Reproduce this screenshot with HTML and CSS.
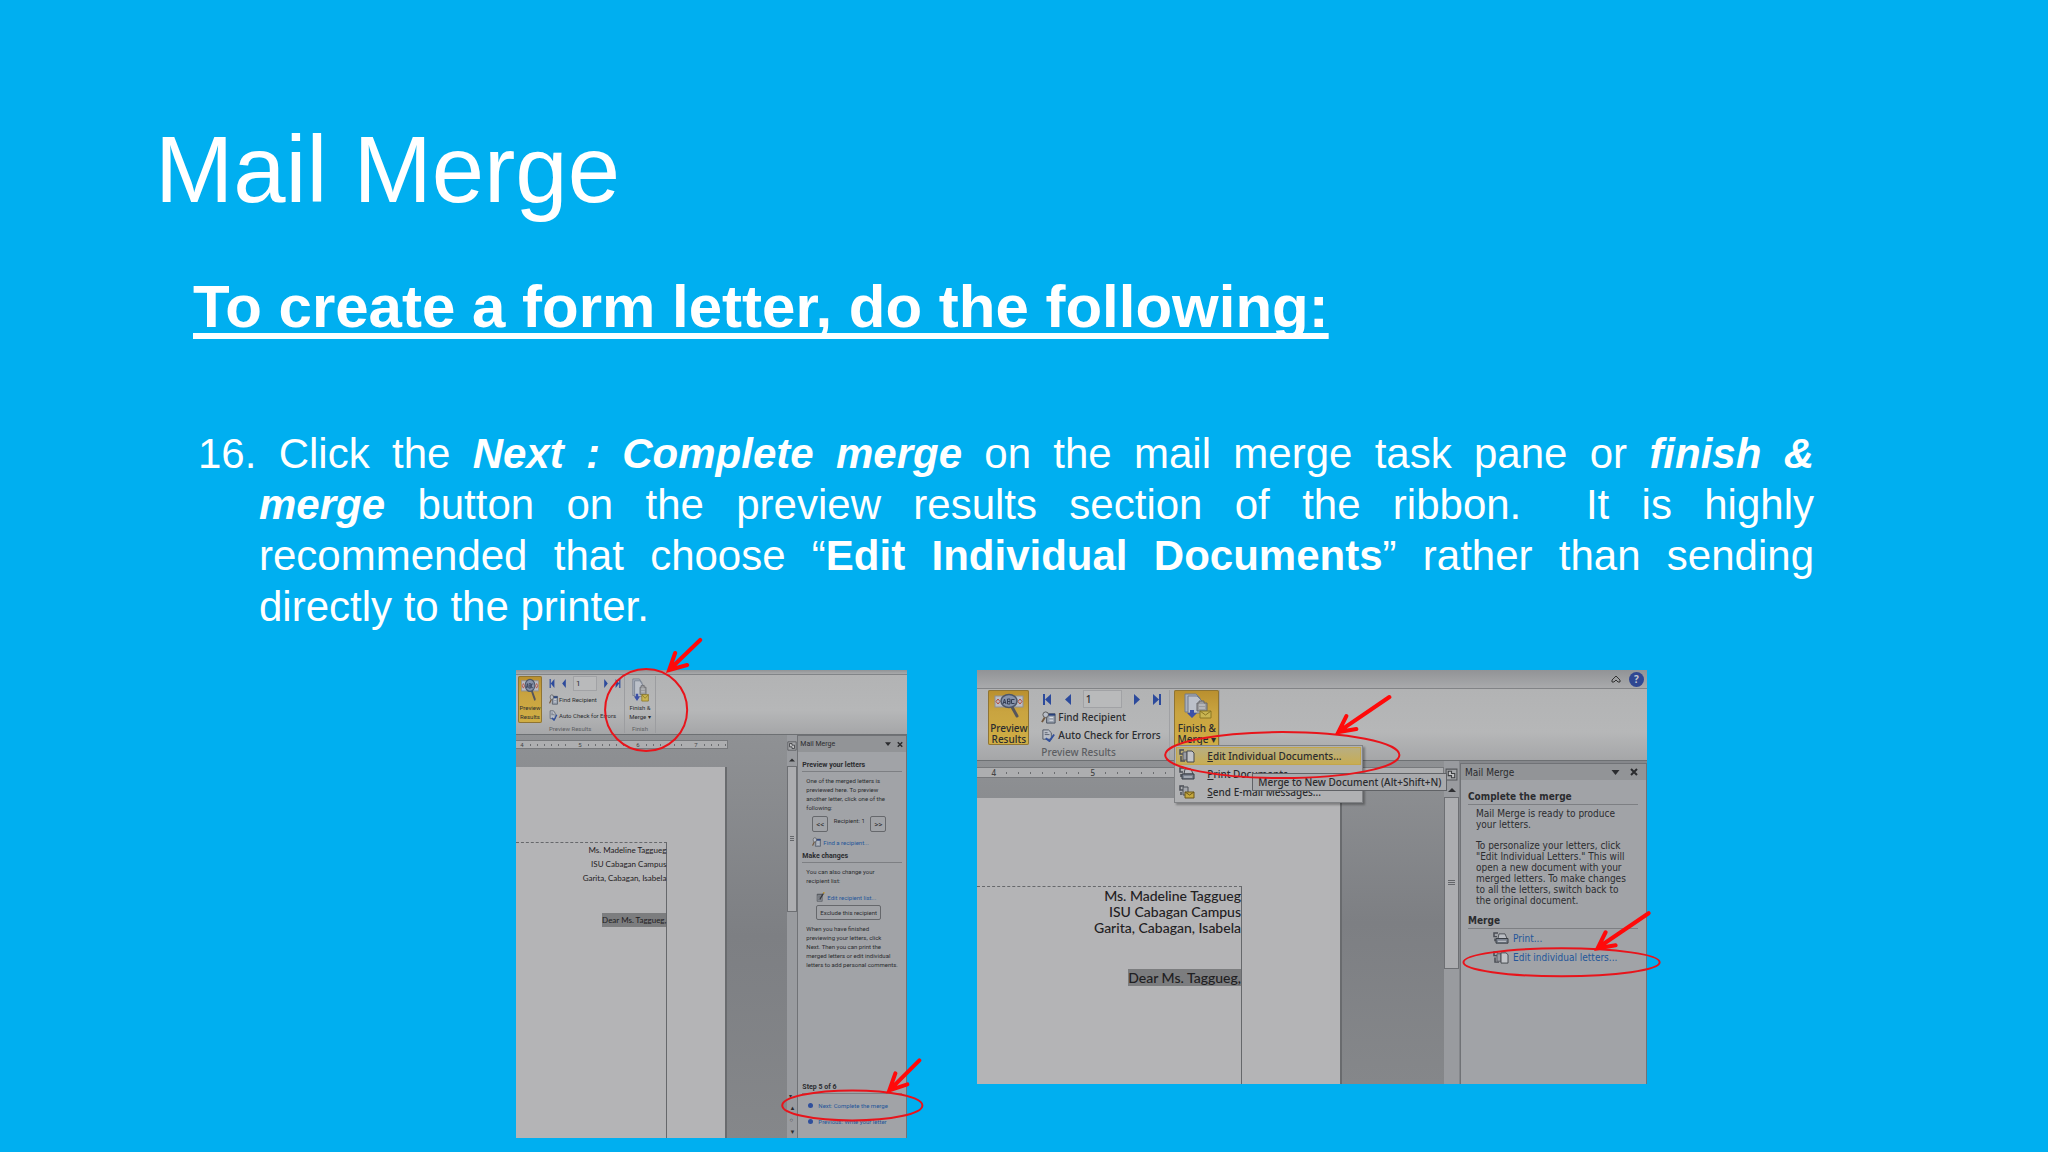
FILE: index.html
```html
<!DOCTYPE html>
<html lang="en">
<head>
    <meta charset="UTF-8">
    <meta name="viewport" content="width=device-width, initial-scale=1.0">
    <title>Mail Merge</title>
    <link rel="stylesheet" href="styles.css">
</head>
<body>
    <!-- Shared icons -->
    <svg class="sprite" aria-hidden="true">
        <symbol id="i-preview" viewBox="0 0 30 26" preserveAspectRatio="none">
            <rect x="1" y="3" width="28" height="11" fill="#b9bcc4" stroke="#8d8f96"/>
            <path d="M4 6l2 2.500-2 2.500-2-2.500zM26 6l2 2.500-2 2.500-2-2.500z" fill="none" stroke="#b5493c"/>
            <path d="M18 14l5 9" stroke="#55555c" stroke-width="3" stroke-linecap="round"/>
            <ellipse cx="15" cy="8" rx="8" ry="6.500" fill="#8793ab" stroke="#4c5669" stroke-width="1.500"/>
            <path d="M9 11l1.500-5 1.500 5M9.500 9.500h2M13.500 6v5h2.500V6zM13.500 8.500h2.500M20.500 6.500h-3v4h3" fill="none" stroke="#343e55"/>
        </symbol>
        <symbol id="i-finish" viewBox="0 0 30 26" preserveAspectRatio="none">
            <path d="M3 1h11l4 4v14H3z" fill="#a9b0bd" stroke="#737b8a"/>
            <path d="M6 3h9l5 5v12H6z" fill="#bcc1ca" stroke="#737b8a"/>
            <path d="M15 10h2V8h5v2h3v8H15z" fill="#9a9b9e" stroke="#66676b"/>
            <path d="M17 12h6M17 15h6" stroke="#d0d1d3"/>
            <path d="M8 17h4v3h3l-5 5-5-5h3z" fill="#3c51a8"/>
            <path d="M18 18h11v7H18z" fill="#c9b552" stroke="#8a7624"/>
            <path d="M18 18l5.500 4 5.500-4" fill="none" stroke="#8a7624"/>
        </symbol>
        <symbol id="i-find" viewBox="0 0 16 14" preserveAspectRatio="none">
            <path d="M6 3h9v10H6z" fill="#9ba3b0" stroke="#444c5b"/>
            <path d="M6 4h9" stroke="#27407c" stroke-width="2"/>
            <circle cx="5" cy="4" r="3" fill="#b9bec8" stroke="#555"/>
            <path d="M4 7l-3 5" stroke="#70573f" stroke-width="2"/>
            <path d="M9 7h4M9 10h4" stroke="#dcdfe4"/>
        </symbol>
        <symbol id="i-check" viewBox="0 0 16 14" preserveAspectRatio="none">
            <path d="M2 1h6l3 3v7H2z" fill="#b8bdc6" stroke="#505765"/>
            <path d="M4 4h3M4 6h5" stroke="#5a6170"/>
            <path d="M5 10l4 3 5-7" fill="none" stroke="#31509c" stroke-width="2"/>
        </symbol>
        <symbol id="i-letters" viewBox="0 0 16 14" preserveAspectRatio="none">
            <path d="M5 1H1v4h3M2 7v5h4" fill="none" stroke="#4a4d55" stroke-width="1.500"/>
            <path d="M4 3h4v8H4z" fill="#9a9da4" stroke="#5a5d64"/>
            <path d="M8 2h5l2 2v9H8z" fill="#c2c4c8" stroke="#45484e"/>
        </symbol>
        <symbol id="i-print" viewBox="0 0 16 14" preserveAspectRatio="none">
            <path d="M5 1H1v4h3M2 7v3" fill="none" stroke="#4a4d55" stroke-width="1.500"/>
            <path d="M6 2h6l2 5H5z" fill="#b9bcc2" stroke="#4d5056"/>
            <path d="M3 7h12v5H3z" fill="#7b828f" stroke="#363a42"/>
            <path d="M5 10h8" stroke="#c8cbd0"/>
        </symbol>
        <symbol id="i-mail" viewBox="0 0 16 14" preserveAspectRatio="none">
            <path d="M5 1H1v4h3M2 7v3" fill="none" stroke="#4a4d55" stroke-width="1.500"/>
            <path d="M4 2h5v8H4z" fill="#a5a8ae" stroke="#4d5056"/>
            <path d="M6 7h9v6H6z" fill="#c5a83f" stroke="#6b571a"/>
            <path d="M6 7l4.500 3L15 7" fill="none" stroke="#6b571a"/>
        </symbol>
        <symbol id="i-edit" viewBox="0 0 16 14" preserveAspectRatio="none">
            <path d="M2 3h9v10H2z" fill="#8e9299" stroke="#4d5056"/>
            <path d="M2 4h9M4 7h5M4 10h5" stroke="#3d4046"/>
            <path d="M7 10l7-9" stroke="#35363a" stroke-width="2"/>
            <path d="M13 2l2-2" stroke="#c79b2e" stroke-width="2"/>
        </symbol>
        <symbol id="i-prev" viewBox="0 0 10 10" preserveAspectRatio="none">
            <path d="M8 0v10L2 5z" fill="#2c4a9c"/>
        </symbol>
        <symbol id="i-next" viewBox="0 0 10 10" preserveAspectRatio="none">
            <path d="M2 0v10l6-5z" fill="#2c4a9c"/>
        </symbol>
        <symbol id="i-first" viewBox="0 0 10 10" preserveAspectRatio="none">
            <path d="M1 0h2v10H1zM9 0v10L3 5z" fill="#2c4a9c"/>
        </symbol>
        <symbol id="i-last" viewBox="0 0 10 10" preserveAspectRatio="none">
            <path d="M7 0h2v10H7zM1 0v10l6-5z" fill="#2c4a9c"/>
        </symbol>
        <symbol id="i-browse" viewBox="0 0 12 12">
            <path d="M1 1h10v10H1z" fill="#a4a6a9" stroke="#55575a"/>
            <path d="M3 3h3v2h3v4H6V7H3z" fill="#c0c1c3" stroke="#3d3f42"/>
        </symbol>
        <symbol id="i-up" viewBox="0 0 8 5">
            <path d="M0 5l4-4 4 4z" fill="#2f3033"/>
        </symbol>
        <symbol id="i-down" viewBox="0 0 8 5">
            <path d="M0 0h8L4 5z" fill="#2b2c2f"/>
        </symbol>
        <symbol id="i-close" viewBox="0 0 8 8">
            <path d="M1 1l6 6M7 1L1 7" stroke="#2b2c2f" stroke-width="2"/>
        </symbol>
    </svg>

    <main class="slide">
        <h1>Mail Merge</h1>
        <h2>To create a form letter, do the following:</h2>
        <p class="step">
            <span class="line first">16. Click the <b><i>Next : Complete merge</i></b> on the mail merge task pane or <b><i>finish &amp;</i></b></span>
            <span class="line"><b><i>merge</i></b> button on the preview results section of the ribbon.&nbsp; It is highly</span>
            <span class="line">recommended that choose “<b>Edit Individual Documents</b>” rather than sending</span>
            <span class="line last">directly to the printer.</span>
        </p>

        <div class="figures">
            <!-- Step 5 of 6 -->
            <section class="shot shot-small">
                <div class="titlebar"></div>
                <div class="ribbon">
                    <button class="big-btn active"><svg><use href="#i-preview"/></svg>Preview<br>Results</button>
                    <div class="group">
                        <div class="nav">
                            <button aria-label="First"><svg><use href="#i-first"/></svg></button>
                            <button aria-label="Previous"><svg><use href="#i-prev"/></svg></button>
                            <input type="text" value="1" aria-label="Record">
                            <button aria-label="Next"><svg><use href="#i-next"/></svg></button>
                            <button aria-label="Last"><svg><use href="#i-last"/></svg></button>
                        </div>
                        <button class="row-btn"><svg><use href="#i-find"/></svg>Find Recipient</button>
                        <button class="row-btn"><svg><use href="#i-check"/></svg>Auto Check for Errors</button>
                        <span class="group-name">Preview Results</span>
                    </div>
                    <div class="group finish">
                        <button class="big-btn"><svg><use href="#i-finish"/></svg>Finish &amp;<br>Merge ▾</button>
                        <span class="group-name">Finish</span>
                    </div>
                </div>
                <div class="work">
                    <div class="doc">
                        <div class="ruler"><span>4</span><i></i><span>5</span><i></i><span>6</span><i></i><span>7</span><i class="tail"></i></div>
                        <div class="page">
                            <div class="letter">
                                <p>Ms. Madeline Taggueg<br>ISU Cabagan Campus<br>Garita, Cabagan, Isabela</p>
                                <p><mark>Dear Ms. Taggueg,</mark></p>
                            </div>
                        </div>
                    </div>
                    <div class="scroll">
                        <svg class="browse"><use href="#i-browse"/></svg>
                        <svg class="up"><use href="#i-up"/></svg>
                        <div class="thumb"></div>
                        <div class="scroll-end"><span>▾</span><span>▲</span><span>○</span><span>▼</span></div>
                    </div>
                    <aside class="pane">
                        <div class="pane-head"><span>Mail Merge</span><svg class="down"><use href="#i-down"/></svg><svg class="close"><use href="#i-close"/></svg></div>
                        <div class="pane-body">
                            <h3>Preview your letters</h3>
                            <p>One of the merged letters is<br>previewed here. To preview<br>another letter, click one of the<br>following:</p>
                            <div class="recipient"><button>&lt;&lt;</button><span>Recipient: 1</span><button>&gt;&gt;</button></div>
                            <a class="link" href="#"><svg><use href="#i-find"/></svg>Find a recipient...</a>
                            <h3>Make changes</h3>
                            <p>You can also change your<br>recipient list:</p>
                            <a class="link indent" href="#"><svg><use href="#i-edit"/></svg>Edit recipient list...</a>
                            <button class="exclude">Exclude this recipient</button>
                            <p>When you have finished<br>previewing your letters, click<br>Next. Then you can print the<br>merged letters or edit individual<br>letters to add personal comments.</p>
                            <div class="steps">
                                <h3>Step 5 of 6</h3>
                                <a class="step-link" href="#">Next: Complete the merge</a>
                                <a class="step-link" href="#">Previous: Write your letter</a>
                            </div>
                        </div>
                    </aside>
                </div>
                <svg class="marks" viewBox="0 0 391 468">
                    <circle cx="130" cy="40" r="41"/>
                    <ellipse cx="336" cy="435" rx="70" ry="15"/>
                    <path d="M184-30L154-1M159-17L153 0L171-5M403 390L374 419M379 403L373 420L391 414"/>
                </svg>
            </section>

            <!-- Step 6 of 6 -->
            <section class="shot shot-large">
                <div class="titlebar">
                    <svg class="collapse" viewBox="0 0 10 8"><path d="M1 5l4-4 4 4v2H7L5 5 3 7H1z" fill="none" stroke="#333"/></svg>
                    <button class="help" aria-label="Help">?</button>
                </div>
                <div class="ribbon">
                    <button class="big-btn active"><svg><use href="#i-preview"/></svg>Preview<br>Results</button>
                    <div class="group">
                        <div class="nav">
                            <button aria-label="First"><svg><use href="#i-first"/></svg></button>
                            <button aria-label="Previous"><svg><use href="#i-prev"/></svg></button>
                            <input type="text" value="1" aria-label="Record">
                            <button aria-label="Next"><svg><use href="#i-next"/></svg></button>
                            <button aria-label="Last"><svg><use href="#i-last"/></svg></button>
                        </div>
                        <button class="row-btn"><svg><use href="#i-find"/></svg>Find Recipient</button>
                        <button class="row-btn"><svg><use href="#i-check"/></svg>Auto Check for Errors</button>
                        <span class="group-name">Preview Results</span>
                    </div>
                    <div class="group finish">
                        <button class="big-btn active"><svg><use href="#i-finish"/></svg>Finish &amp;<br>Merge ▾</button>
                        <div class="menu">
                            <button class="hover"><svg><use href="#i-letters"/></svg><span><u>E</u>dit Individual Documents...</span></button>
                            <button><svg><use href="#i-print"/></svg><span><u>P</u>rint Documents...</span></button>
                            <button><svg><use href="#i-mail"/></svg><span><u>S</u>end E-mail Messages...</span></button>
                            <div class="tooltip">Merge to New Document (Alt+Shift+N)</div>
                        </div>
                    </div>
                </div>
                <div class="work">
                    <div class="doc">
                        <div class="ruler"><span>4</span><i></i><span>5</span><i></i><span>6</span><i></i><span>7</span></div>
                        <div class="page">
                            <div class="letter">
                                <p>Ms. Madeline Taggueg<br>ISU Cabagan Campus<br>Garita, Cabagan, Isabela</p>
                                <p><mark>Dear Ms. Taggueg,</mark></p>
                            </div>
                        </div>
                    </div>
                    <div class="scroll">
                        <svg class="browse"><use href="#i-browse"/></svg>
                        <svg class="up"><use href="#i-up"/></svg>
                        <div class="thumb"></div>
                    </div>
                    <aside class="pane">
                        <div class="pane-head"><span>Mail Merge</span><svg class="down"><use href="#i-down"/></svg><svg class="close"><use href="#i-close"/></svg></div>
                        <div class="pane-body">
                            <h3>Complete the merge</h3>
                            <p>Mail Merge is ready to produce<br>your letters.</p>
                            <p>To personalize your letters, click<br>"Edit Individual Letters." This will<br>open a new document with your<br>merged letters. To make changes<br>to all the letters, switch back to<br>the original document.</p>
                            <h3>Merge</h3>
                            <a class="link" href="#"><svg><use href="#i-print"/></svg>Print...</a>
                            <a class="link" href="#"><svg><use href="#i-letters"/></svg>Edit individual letters...</a>
                        </div>
                    </aside>
                </div>
                <svg class="marks" viewBox="0 0 669 414">
                    <ellipse cx="305" cy="85" rx="117" ry="23"/>
                    <ellipse cx="584" cy="292" rx="98" ry="14"/>
                    <path d="M412 27L362 61M369 46L361 62L379 59M671 243L621 277M628 262L620 278L638 275"/>
                </svg>
            </section>
        </div>
    </main>
</body>
</html>
```
FILE: styles.css
```css
* {
    box-sizing: border-box;
}
body {
    margin: 0;
    min-height: 100vh;
    background-color: #00aff0;
    color: white;
    font-family: "Liberation Sans", Arial, sans-serif;
}
h1, h2, h3, p {
    margin: 0;
}
button, input {
    font: inherit;
    color: inherit;
    margin: 0;
    padding: 0;
    border: none;
    background: none;
}
.sprite {
    display: none;
}
.slide {
    padding-top: 116px;
}
h1 {
    padding-left: 155px;
    font-size: 94px;
    font-weight: normal;
    line-height: 108px;
}
h2 {
    padding: 49px 0 0 193px;
    font-size: 60px;
    line-height: 68px;
    text-decoration: underline;
    text-decoration-thickness: 6px;
    text-underline-offset: 6px;
    text-decoration-skip-ink: none;
}
.step {
    padding: 87px 234px 0 259px;
    font-size: 42px;
    line-height: 51px;
}
.line {
    display: block;
    text-align: justify;
    text-align-last: justify;
}
.line.first {
    margin-left: -61px;
}
.line.last {
    text-align-last: left;
}
.figures {
    display: grid;
    grid-template-columns: 391fr 669fr;
    gap: 70px;
    align-items: start;
    padding: 38px 401px 13px 516px;
}

/* Word windows */
.shot {
    position: relative;
    display: flex;
    flex-direction: column;
    min-width: 0;
    background: #85878b;
    color: #2b2c2f;
    font-family: "Noto Sans", sans-serif;
    white-space: nowrap;
}
.shot-small {
    aspect-ratio: 391 / 468;
    font-family: Roboto, sans-serif;
    font-size: 6px;
    line-height: 9px;
}
.shot-large {
    aspect-ratio: 669 / 414;
    font-size: 10px;
    font-weight: 500;
    line-height: 11px;
}
.titlebar {
    display: flex;
    justify-content: flex-end;
    align-items: center;
    gap: 8px;
    height: 5px;
    padding-right: 3px;
    background: linear-gradient(#919396, #a9aaac);
    border-bottom: 1px solid #828487;
}
.collapse {
    width: 10px;
    height: 8px;
}
.help {
    width: 15px;
    height: 15px;
    border-radius: 50%;
    background: #2f4792;
    color: #c3c6d0;
    font-weight: bold;
}
.ribbon {
    display: flex;
    height: 60px;
    padding: 1px 2px;
    background: linear-gradient(#b2b3b4, #b6b7b8 60%, #a5a6a8);
    border-bottom: 1px solid #6d7073;
}
.big-btn {
    display: flex;
    flex-direction: column;
    align-items: center;
    border-radius: 2px;
}
.big-btn.active {
    background: linear-gradient(#b98f2e, #c9a440 40%, #d0ae45);
    box-shadow: inset 0 0 0 1px #8f7433;
}
.group {
    display: flex;
    flex-direction: column;
}
.nav {
    display: flex;
    align-items: center;
}
.nav button {
    display: flex;
}
.nav input {
    border: 1px solid #a1a2a5;
    background: #b9babb;
}
.row-btn {
    display: flex;
    align-items: center;
}
.group-name {
    color: #5c5e62;
}
.work {
    display: flex;
    flex: 1;
    min-height: 0;
}
.doc {
    display: flex;
    flex-direction: column;
    flex: 1;
    min-width: 0;
    background: linear-gradient(#8f9194, #7d7f83 50%, #85878a);
}
.ruler {
    display: flex;
    align-items: center;
    background: #adaeb0;
    border: 1px solid #77797c;
    border-left: none;
    color: #444;
    overflow: hidden;
}
.ruler span {
    flex: none;
    text-align: center;
}
.ruler i {
    flex: none;
    height: 2px;
}
.page {
    flex: 1;
    background: #b4b4b6;
    border-right: 2px solid #696b6e;
}
.letter {
    height: 100%;
    border-top: 1px dashed #66686b;
    border-right: 1px solid #66686b;
    font-family: Lato, sans-serif;
    text-align: right;
    color: #1f2022;
}
mark {
    background: #7c7d7f;
    color: inherit;
}
.scroll {
    display: flex;
    flex-direction: column;
    align-items: center;
    flex: none;
    background: #999b9f;
}
.thumb {
    display: flex;
    align-items: center;
    justify-content: center;
    width: 100%;
    border: 1px solid #6d6f73;
    background: #acadb0;
}
.thumb::after {
    content: "";
    width: 50%;
    height: 6px;
    background: repeating-linear-gradient(#64666a 0 1px, #acadb0 1px 2px);
}
.pane {
    flex: none;
    border: 1px solid #707276;
    border-bottom: none;
    background: #a1a3a7;
}
.pane-head {
    display: flex;
    align-items: center;
    background: #929497;
}
.pane-head span {
    flex: 1;
}
.pane h3 {
    font-size: inherit;
    font-weight: bold;
    border-bottom: 1px solid #7d7f83;
}
.link {
    display: flex;
    align-items: center;
    color: #24569a;
    text-decoration: none;
}
.marks {
    position: absolute;
    inset: 0;
    width: 100%;
    height: 100%;
    overflow: visible;
    fill: none;
    stroke: #e8141b;
    stroke-width: 2;
    pointer-events: none;
}
.marks path {
    stroke: #ff0a0a;
    stroke-width: 4;
    stroke-linecap: round;
}

/* Small window */
.shot-small .big-btn {
    width: 24px;
    height: 47px;
    padding-top: 2px;
}
.shot-small .big-btn svg {
    width: 18px;
    height: 24px;
    margin-bottom: 1px;
}
.shot-small .group {
    width: 82px;
    padding-left: 7px;
}
.shot-small .nav {
    justify-content: space-between;
    height: 15px;
    width: 72px;
}
.shot-small .nav svg {
    width: 6px;
    height: 9px;
}
.shot-small .nav input {
    width: 24px;
    height: 15px;
    padding-left: 2px;
    font-size: 8px;
}
.shot-small .row-btn {
    gap: 1px;
    height: 16px;
}
.shot-small .row-btn svg {
    width: 9px;
    height: 11px;
}
.shot-small .group-name {
    margin-top: auto;
}
.shot-small .finish {
    width: 32px;
    align-items: center;
    padding: 0;
    border-left: 1px solid #9c9da0;
    border-right: 1px solid #9c9da0;
}
.shot-small .ruler {
    height: 9px;
    margin: 5px 59px 0 0;
    padding-left: 3px;
}
.shot-small .ruler span {
    width: 6px;
}
.shot-small .ruler i {
    width: 42px;
    margin: 0 5px;
    background: repeating-linear-gradient(90deg, #6b6d70 0 1px, transparent 1px 7px);
}
.shot-small .ruler .tail {
    width: 22px;
}
.shot-small .page {
    margin: 18px 60px 0 0;
    padding: 75px 58px 0 0;
}
.shot-small .letter {
    font-size: 8px;
    line-height: 14px;
}
.shot-small .letter p + p {
    margin-top: 28px;
}
.shot-small mark {
    padding: 2px 0;
}
.shot-small .scroll {
    width: 10px;
}
.shot-small .browse {
    width: 10px;
    height: 14px;
    margin-top: 4px;
}
.shot-small .up {
    width: 6px;
    height: 5px;
    margin: 4px 0;
}
.shot-small .thumb {
    height: 146px;
}
.scroll-end {
    display: flex;
    flex-direction: column;
    gap: 4px;
    margin-top: auto;
    padding-bottom: 2px;
    line-height: 8px;
}
.shot-small .pane {
    width: 110px;
}
.shot-small .pane-head {
    height: 16px;
    gap: 6px;
    padding: 0 3px 0 2px;
    font-size: 7px;
}
.down {
    width: 6px;
    height: 4px;
}
.close {
    width: 6px;
    height: 7px;
}
.shot-small .pane-body {
    display: flex;
    flex-direction: column;
    height: 386px;
    padding: 9px 4px 9px 4px;
}
.shot-small h3 {
    height: 11px;
    font-size: 7px;
}
.shot-small .pane-body p {
    padding: 4px 0 4px 4px;
}
.recipient {
    display: flex;
    justify-content: space-between;
    width: 84px;
    padding-left: 10px;
}
.recipient button {
    width: 16px;
    height: 16px;
    border: 1px solid #66686c;
    border-radius: 2px;
    font-size: 8px;
}
.shot-small .link {
    gap: 2px;
    height: 20px;
    padding-left: 10px;
}
.shot-small .link.indent {
    height: 16px;
    padding-left: 14px;
}
.shot-small .link svg {
    width: 9px;
    height: 10px;
}
.exclude {
    align-self: flex-start;
    height: 15px;
    margin-left: 14px;
    padding: 0 3px;
    border: 1px solid #66686c;
    border-radius: 2px;
}
.steps {
    display: flex;
    flex-direction: column;
    margin-top: auto;
}
.steps h3 {
    margin-bottom: 3px;
}
.step-link {
    display: flex;
    align-items: center;
    gap: 5px;
    height: 16px;
    padding-left: 6px;
    color: #24569a;
    text-decoration: none;
}
.step-link::before {
    content: "";
    width: 5px;
    height: 5px;
    border-radius: 50%;
    background: #2f4f9c;
}

/* Large window */
.shot-large .titlebar {
    height: 19px;
}
.shot-large .ribbon {
    height: 72px;
    padding: 1px 0 0 11px;
}
.shot-large .big-btn {
    width: 41px;
    height: 55px;
    padding-top: 3px;
}
.shot-large .big-btn svg {
    width: 30px;
    height: 26px;
    margin-bottom: 4px;
}
.shot-large .group {
    width: 141px;
    padding-left: 12px;
    border-right: 1px solid #a0a1a4;
}
.shot-large .nav {
    justify-content: space-between;
    width: 122px;
    height: 18px;
    padding: 0 1px;
}
.shot-large .nav svg {
    width: 10px;
    height: 11px;
}
.shot-large .nav input {
    width: 39px;
    height: 18px;
    padding-left: 2px;
}
.shot-large .row-btn {
    gap: 2px;
    height: 18px;
}
.shot-large .row-btn svg {
    width: 15px;
    height: 13px;
}
.shot-large .group-name {
    margin-top: 3px;
}
.shot-large .finish {
    position: relative;
    width: 50px;
    padding-left: 4px;
}
.shot-large .finish .big-btn {
    width: 45px;
    height: 57px;
}
.menu {
    position: absolute;
    top: 55px;
    left: 4px;
    width: 189px;
    padding: 1px;
    border: 1px solid #808285;
    background: #b0b1b3;
    box-shadow: 2px 2px 2px rgba(0,0,0,0.3);
}
.menu button {
    display: flex;
    align-items: center;
    gap: 12px;
    width: 100%;
    height: 18px;
    padding-left: 3px;
}
.menu button.hover {
    border: 1px solid #c3a64a;
    background: linear-gradient(#b8ae82, #c7ad54);
    padding-left: 2px;
}
.menu svg {
    width: 16px;
    height: 14px;
}
.tooltip {
    position: absolute;
    top: 27px;
    left: 77px;
    padding: 2px 5px;
    border: 1px solid #606266;
    background: #a9aaad;
    line-height: 12px;
}
.shot-large .ruler {
    height: 11px;
    margin-top: 6px;
    padding-left: 12px;
    font-size: 8px;
}
.shot-large .ruler span {
    width: 9px;
}
.shot-large .ruler i {
    width: 74px;
    margin: 0 8px;
    background: repeating-linear-gradient(90deg, #6b6d70 0 1px, transparent 1px 12px);
}
.shot-large .page {
    margin: 20px 102px 0 0;
    padding: 88px 98px 0 0;
}
.shot-large .letter {
    font-size: 14px;
    line-height: 16px;
    padding-top: 1px;
}
.shot-large .letter p + p {
    margin-top: 34px;
}
.shot-large .scroll {
    width: 15px;
}
.shot-large .browse {
    width: 13px;
    height: 15px;
    margin-top: 6px;
}
.shot-large .up {
    width: 8px;
    height: 5px;
    margin: 5px 0;
}
.shot-large .thumb {
    height: 172px;
}
.shot-large .pane {
    width: 187px;
    margin: 2px 0 0 1px;
    font-family: "DejaVu Sans Condensed", "Noto Sans", sans-serif;
}
.shot-large .pane-head {
    height: 16px;
    gap: 10px;
    padding: 0 8px 0 4px;
}
.shot-large .down {
    width: 9px;
    height: 5px;
}
.shot-large .close {
    width: 8px;
    height: 8px;
}
.shot-large .pane-body {
    padding: 11px 8px 0 7px;
}
.shot-large h3 {
    height: 14px;
}
.shot-large .pane-body p {
    padding: 3px 0 7px 8px;
}
.shot-large .pane-body p + h3 {
    margin-top: 2px;
}
.shot-large .link {
    height: 19px;
    gap: 4px;
    padding-left: 25px;
}
.shot-large .link svg {
    width: 16px;
    height: 13px;
}
```
